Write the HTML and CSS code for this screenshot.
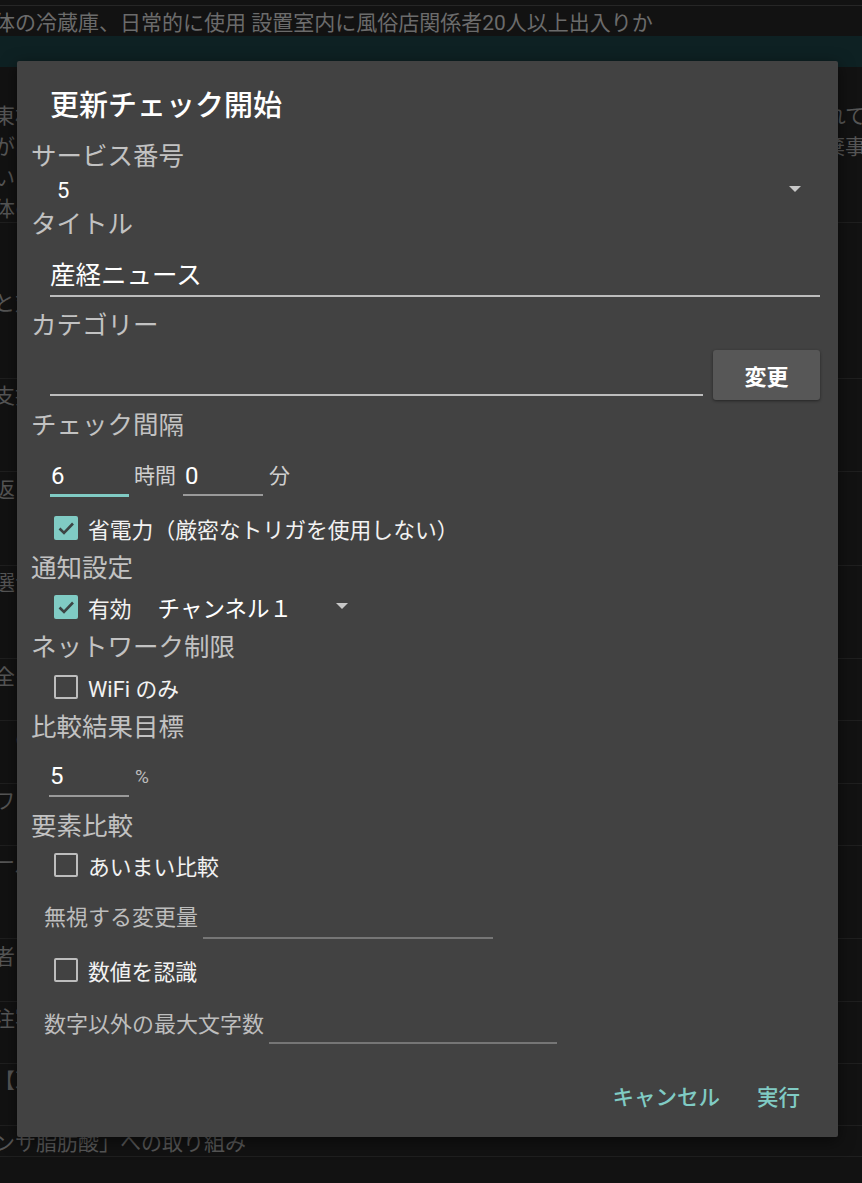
FILE: index.html
```html
<!DOCTYPE html>
<html lang="ja">
<head>
<meta charset="utf-8">
<title>更新チェック開始</title>
<link rel="stylesheet" href="styles.css">
</head>
<body>
<div class="bg">
  <div class="bgline first"><span class="l">体の冷蔵庫、日常的に使用 設置室内に風俗店関係者20人以上出入りか</span></div>
  <div class="bgline band"></div>
  <div class="bgline"></div>
  <div class="bgline"><span class="l">東村</span><span class="r">れて</span></div>
  <div class="bgline"><span class="l">が出</span><span class="r">棄事</span></div>
  <div class="bgline"><span class="l">いる</span></div>
  <div class="bgline sep"><span class="l">体の</span></div>
  <div class="bgline"></div>
  <div class="bgline"></div>
  <div class="bgline"><span class="l">と対</span></div>
  <div class="bgline"></div>
  <div class="bgline sep"></div>
  <div class="bgline"><span class="l">支払</span></div>
  <div class="bgline"></div>
  <div class="bgline sep"></div>
  <div class="bgline"><span class="l">返い</span></div>
  <div class="bgline"></div>
  <div class="bgline sep"></div>
  <div class="bgline"><span class="l">選台</span></div>
  <div class="bgline"></div>
  <div class="bgline sep"></div>
  <div class="bgline"><span class="l">全そ</span></div>
  <div class="bgline sep"></div>
  <div class="bgline"><span class="l">　の</span></div>
  <div class="bgline sep"></div>
  <div class="bgline"><span class="l">ワコ</span></div>
  <div class="bgline sep"></div>
  <div class="bgline"><span class="l">ー月</span></div>
  <div class="bgline"></div>
  <div class="bgline sep"></div>
  <div class="bgline"><span class="l">者い</span></div>
  <div class="bgline sep"></div>
  <div class="bgline"><span class="l">注写</span></div>
  <div class="bgline sep"></div>
  <div class="bgline"><span class="l">【耳</span></div>
  <div class="bgline sep"></div>
  <div class="bgline sep"><span class="l">ンサ脂肪酸」への取り組み</span></div>
</div>

<div class="dialog">
  <div class="title">更新チェック開始</div>

  <div class="label gap14">サービス番号</div>
  <div class="select gap2"><span class="select-value">5</span><span class="arrow"></span></div>

  <div class="label gap2">タイトル</div>
  <div class="field wide gap19">産経ニュース</div>

  <div class="label gap12">カテゴリー</div>
  <div class="catrow gap9">
    <div class="field cat"></div>
    <div class="btn-raised">変更</div>
  </div>

  <div class="label gap9">チェック間隔</div>
  <div class="inlinerow gap19">
    <div class="field small focused">6</div>
    <span class="unit">時間</span>
    <div class="field small plain second">0</div>
    <span class="unit unit-min">分</span>
  </div>

  <div class="check gap15"><span class="box on"><svg viewBox="0 0 24 24" width="24" height="24"><path d="M5.5 12.5 L10 17 L19 7.5" fill="none" stroke="#3c4444" stroke-width="2.6"/></svg></span><span class="check-text">省電力（厳密なトリガを使用しない）</span></div>

  <div class="label gap8">通知設定</div>
  <div class="check gap7"><span class="box on"><svg viewBox="0 0 24 24" width="24" height="24"><path d="M5.5 12.5 L10 17 L19 7.5" fill="none" stroke="#3c4444" stroke-width="2.6"/></svg></span><span class="check-text">有効</span><span class="channel">チャンネル１</span><span class="arrow small-arrow"></span></div>

  <div class="label gap8">ネットワーク制限</div>
  <div class="check gap8"><span class="box"></span><span class="check-text">WiFi のみ</span></div>

  <div class="label gap8">比較結果目標</div>
  <div class="inlinerow gap17">
    <div class="field small plain pct">5</div>
    <span class="percent">%</span>
  </div>

  <div class="label gap13">要素比較</div>
  <div class="check gap7"><span class="box"></span><span class="check-text">あいまい比較</span></div>

  <div class="subrow gap21">
    <span class="sublabel">無視する変更量</span>
    <div class="subfield f1"></div>
  </div>

  <div class="check gap15"><span class="box"></span><span class="check-text">数値を認識</span></div>

  <div class="subrow gap23">
    <span class="sublabel">数字以外の最大文字数</span>
    <div class="subfield f2"></div>
  </div>

  <div class="actions">
    <span class="textbtn">キャンセル</span>
    <span class="textbtn">実行</span>
  </div>
</div>
</body>
</html>
```
FILE: styles.css
```css
* { box-sizing: border-box; }

html, body {
  margin: 0;
  padding: 0;
}

body {
  width: 862px;
  height: 1183px;
  overflow: hidden;
  background: #121212;
  font-family: Roboto, "Noto Sans CJK JP", "Noto Sans", sans-serif;
  position: relative;
}

/* ---------- dimmed background list ---------- */
.bg {
  padding-top: 5px;
}

.bgline {
  height: 31.15px;
  display: flex;
  justify-content: space-between;
  align-items: center;
  font-size: 21px;
  color: #565656;
  white-space: nowrap;
  overflow: hidden;
}

.bgline.first {
  border-top: 1px solid #262626;
  color: #6b6b6b;
}

.bgline.band {
  background: #0e2123;
}

.bgline.sep {
  border-bottom: 1px solid #1f1f1f;
}

.bgline .l {
  margin-left: -6px;
}

.bgline .r {
  margin-right: -4px;
}

/* ---------- dialog ---------- */
.dialog {
  position: absolute;
  left: 17px;
  top: 61px;
  width: 821px;
  height: 1076px;
  background: #424242;
  border-radius: 2px;
  box-shadow: 0 4px 16px rgba(0, 0, 0, 0.5);
  padding: 0 18px 0 15px;
  display: flex;
  flex-direction: column;
  align-items: stretch;
  color: #fff;
}

.title {
  margin: 25px 0 0 18px;
  line-height: 40px;
  height: 40px;
  font-size: 29px;
  font-weight: 500;
  color: #ffffff;
}

.label {
  font-size: 25.5px;
  line-height: 32px;
  height: 32px;
  color: #c2c2c2;
  margin-left: -1px;
}

.gap2 { margin-top: 2px; }
.gap7 { margin-top: 7px; }
.gap8 { margin-top: 8px; }
.gap9 { margin-top: 9px; }
.gap12 { margin-top: 12px; }
.gap13 { margin-top: 13px; }
.gap14 { margin-top: 14px; }
.gap15 { margin-top: 15px; }
.gap17 { margin-top: 17px; }
.gap19 { margin-top: 19px; }
.gap21 { margin-top: 21px; }
.gap23 { margin-top: 23px; }

/* spinner */
.select {
  margin-left: 18px;
  height: 32px;
  display: flex;
  align-items: center;
  justify-content: space-between;
  padding: 0 19px 0 7px;
  font-size: 22px;
  color: #fff;
}

.arrow {
  width: 0;
  height: 0;
  border-left: 6px solid transparent;
  border-right: 6px solid transparent;
  border-top: 6px solid #c8c8c8;
  margin-top: -2px;
}

/* text fields */
.field {
  line-height: 32px;
  font-size: 25.5px;
  color: #fff;
  border-bottom: 2px solid #bdbdbd;
}

.field.wide {
  margin-left: 18px;
  height: 38px;
  padding-bottom: 4px;
}

.catrow {
  margin-left: 18px;
  height: 50px;
  display: flex;
  align-items: flex-start;
}

.field.cat {
  flex: 1;
  height: 46px;
}

.btn-raised {
  margin-left: 10px;
  width: 107px;
  height: 50px;
  background: #575757;
  border-radius: 3px;
  box-shadow: 0 1px 3px rgba(0, 0, 0, 0.45);
  display: flex;
  align-items: center;
  justify-content: center;
  font-size: 22px;
  font-weight: 700;
  color: #fff;
}

.inlinerow {
  margin-left: 18px;
  display: flex;
  align-items: flex-start;
}

.field.small {
  width: 79px;
  height: 36px;
  font-size: 24px;
  padding-left: 1px;
}

.field.focused {
  border-bottom: 3px solid #80cbc4;
  height: 37px;
}

.field.plain {
  border-bottom: 2px solid #9a9a9a;
  width: 80px;
}

.field.second {
  margin-left: 7px;
  padding-left: 2px;
}

.field.pct {
  margin-left: -1px;
  height: 37px;
}

.unit {
  margin-left: 5px;
  font-size: 21px;
  line-height: 32px;
  color: #cfcfcf;
}

.unit-min {
  margin-left: 6px;
}

.percent {
  margin-left: 6px;
  font-size: 19px;
  line-height: 34px;
  color: #bdbdbd;
}

/* checkboxes */
.check {
  margin-left: 22px;
  height: 32px;
  display: flex;
  align-items: center;
}

.box {
  width: 24px;
  height: 24px;
  border: 2.5px solid #bdbdbd;
  border-radius: 2px;
  flex: none;
}

.box.on {
  border: none;
  background: #80cbc4;
}

.box svg {
  display: block;
}

.check-text {
  margin-left: 10px;
  font-size: 21.8px;
  color: #f2f2f2;
}

.channel {
  margin-left: 26px;
  font-size: 22.5px;
  color: #fff;
}

.small-arrow {
  margin-left: 44px;
}

/* sub rows */
.subrow {
  margin-left: 12px;
  display: flex;
  align-items: flex-start;
}

.sublabel {
  font-size: 22px;
  line-height: 32px;
  color: #bdbdbd;
}

.subfield {
  margin-left: 5px;
  border-bottom: 2px solid #767676;
}

.subfield.f1 {
  width: 290px;
  height: 37px;
}

.subfield.f2 {
  width: 288px;
  height: 35px;
}

/* actions */
.actions {
  margin-top: 33px;
  height: 36px;
  display: flex;
  justify-content: flex-end;
  align-items: center;
  gap: 37px;
  padding-right: 20px;
}

.textbtn {
  font-size: 21.5px;
  font-weight: 500;
  color: #80cbc4;
}
```
